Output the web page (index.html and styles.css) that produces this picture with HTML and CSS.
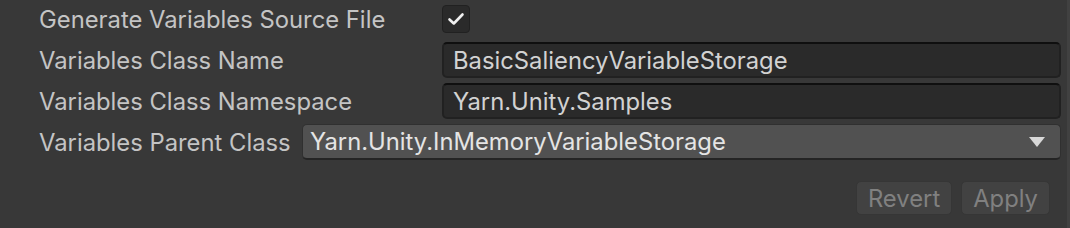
FILE: index.html
```html
<!DOCTYPE html>
<html lang="en">
<head>
    <meta charset="UTF-8">
    <title>Variables Settings</title>
    <link rel="stylesheet" href="styles.css">
</head>
<body>
    <div class="inspector">
        <div class="row toggle-row">
            <span class="label">Generate Variables Source File</span>
            <span class="checkbox">
                <svg width="18" height="14" viewBox="0 0 18 14">
                    <path d="M2.5 7.5 L6.8 11.5 L15.5 2.5" fill="none" stroke="#f0f0f0" stroke-width="2.6" stroke-linecap="round" stroke-linejoin="round"/>
                </svg>
            </span>
        </div>
        <div class="row">
            <span class="label">Variables Class Name</span>
            <span class="text-field">BasicSaliencyVariableStorage</span>
        </div>
        <div class="row">
            <span class="label">Variables Class Namespace</span>
            <span class="text-field">Yarn.Unity.Samples</span>
        </div>
        <div class="row">
            <span class="label short">Variables Parent Class</span>
            <span class="dropdown">
                <span>Yarn.Unity.InMemoryVariableStorage</span>
                <span class="arrow"></span>
            </span>
        </div>
        <div class="actions">
            <button class="button" disabled>Revert</button>
            <button class="button" disabled>Apply</button>
        </div>
    </div>
</body>
</html>
```

FILE: styles.css
```css
/* Unity-like inspector, dark theme */
:root {
    --bg: #383838;
    --label: #c4c4c4;
    --field-bg: #2a2a2a;
    --field-border: #212121;
    --popup-bg: #515151;
    --popup-border: #303030;
}

* {
    margin: 0;
    padding: 0;
    box-sizing: border-box;
}

body {
    width: 1070px;
    height: 228px;
    background-color: var(--bg);
    border-right: 3px solid #414141;
    font-family: Inter, "Noto Sans", sans-serif;
    font-size: 23.8px;
    color: var(--label);
    overflow: hidden;
}

.inspector {
    padding: 5px 6px 0 39px;
    display: flex;
    flex-direction: column;
    gap: 5px;
}

.row {
    display: flex;
    align-items: center;
    height: 36px;
}

.toggle-row {
    height: 28px;
    margin-bottom: 4px;
}

.label {
    width: 403px;
    flex-shrink: 0;
    white-space: nowrap;
}

.label.short {
    width: 263px;
}

.checkbox {
    width: 28px;
    height: 28px;
    background-color: var(--field-bg);
    border: 1px solid var(--field-border);
    border-radius: 4px;
    display: flex;
    align-items: center;
    justify-content: center;
}

.text-field {
    flex: 1;
    height: 36px;
    padding: 0 9px;
    display: flex;
    align-items: center;
    background-color: var(--field-bg);
    border: 2px solid var(--field-border);
    border-top-color: #0f0f0f;
    border-radius: 5px;
    color: #d2d2d2;
}

.dropdown {
    flex: 1;
    height: 36px;
    padding: 0 8px 0 7px;
    display: flex;
    align-items: center;
    justify-content: space-between;
    background-color: var(--popup-bg);
    border: 1px solid var(--popup-border);
    border-bottom: 2px solid #242424;
    border-radius: 5px;
    color: #e4e4e4;
}

.arrow {
    width: 0;
    height: 0;
    margin-right: 7px;
    border-left: 8px solid transparent;
    border-right: 8px solid transparent;
    border-top: 10px solid #d8d8d8;
}

.actions {
    display: flex;
    justify-content: flex-end;
    gap: 9px;
    margin-top: 16px;
    padding-right: 11px;
}

.button {
    height: 34px;
    padding: 0 11px;
    font-family: inherit;
    font-size: 23.8px;
    color: #808080;
    background-color: #424242;
    border: 1px solid #363636;
    border-radius: 5px;
}
```
